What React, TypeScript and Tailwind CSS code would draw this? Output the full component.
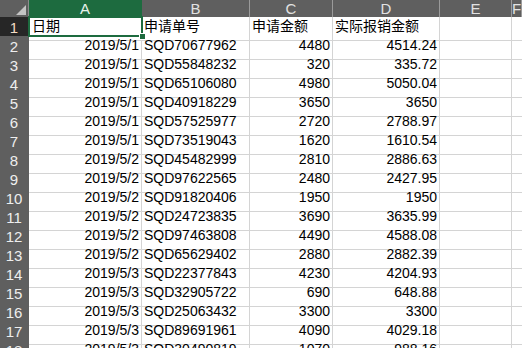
import React from 'react';

const rows: [string, string, string, string][] = [
  ['2019/5/1', 'SQD70677962', '4480', '4514.24'],
  ['2019/5/1', 'SQD55848232', '320', '335.72'],
  ['2019/5/1', 'SQD65106080', '4980', '5050.04'],
  ['2019/5/1', 'SQD40918229', '3650', '3650'],
  ['2019/5/1', 'SQD57525977', '2720', '2788.97'],
  ['2019/5/1', 'SQD73519043', '1620', '1610.54'],
  ['2019/5/2', 'SQD45482999', '2810', '2886.63'],
  ['2019/5/2', 'SQD97622565', '2480', '2427.95'],
  ['2019/5/2', 'SQD91820406', '1950', '1950'],
  ['2019/5/2', 'SQD24723835', '3690', '3635.99'],
  ['2019/5/2', 'SQD97463808', '4490', '4588.08'],
  ['2019/5/2', 'SQD65629402', '2880', '2882.39'],
  ['2019/5/3', 'SQD22377843', '4230', '4204.93'],
  ['2019/5/3', 'SQD32905722', '690', '648.88'],
  ['2019/5/3', 'SQD25063432', '3300', '3300'],
  ['2019/5/3', 'SQD89691961', '4090', '4029.18'],
  ['2019/5/3', 'SQD30490819', '1070', '988.16'],
];

const cols = ['A', 'B', 'C', 'D', 'E', 'F'];
const grid = 'grid grid-cols-[29px_113px_108px_83px_107px_72px_1fr]';
const font = "font-['Liberation_Sans','Noto_Sans_CJK_SC',sans-serif]";

export default function App() {
  return (
    <div className={`relative w-[522px] h-[348px] overflow-hidden bg-white text-[14px] ${font}`}>
      {/* column header */}
      <div className={`${grid} h-[17px] bg-[#5f5f5f]`}>
        <div className="relative border-r border-[#8c8c8c]">
          <div className="absolute right-[2px] bottom-[2px] w-0 h-0 border-l-[10px] border-l-transparent border-b-[10px] border-b-[#c4c4c4]" />
        </div>
        {cols.map((c, i) => (
          <div
            key={c}
            className={`flex items-center justify-center leading-[17px] text-[15px] border-r ${
              i === 0 ? 'bg-[#1d6b3f] text-[#e8f2ec] border-[#1d6b3f]' : 'text-[#e2e2e2] border-[#9a9a9a]'
            }`}
          >
            {c}
          </div>
        ))}
      </div>

      {/* row 1 */}
      <div className={`${grid} h-[19px]`}>
        <div className="flex items-center justify-center bg-[#262626] text-[#f3dcc4] text-[15px] border-r border-b border-[#262626]">
          1
        </div>
        <div className="leading-[18px] pl-[3px] border-r border-b border-[#d4d4d4]">日期</div>
        <div className="leading-[18px] pl-[2px] border-r border-b border-[#d4d4d4] whitespace-nowrap">申请单号</div>
        <div className="leading-[18px] pl-[2px] border-r border-b border-[#d4d4d4] whitespace-nowrap">申请金额</div>
        <div className="leading-[18px] pl-[2px] border-r border-b border-[#d4d4d4] whitespace-nowrap">实际报销金额</div>
        <div className="border-r border-b border-[#d4d4d4]" />
        <div className="border-b border-[#d4d4d4]" />
      </div>

      {rows.map((r, i) => (
        <div key={i} className={`${grid} h-[19px]`}>
          <div className="flex items-center justify-center bg-[#5f5f5f] text-[#eeeeee] text-[15px] border-r border-b border-[#8c8c8c] border-r-[#5f5f5f]">
            {i + 2}
          </div>
          <div className="leading-[18px] pr-[2px] text-right border-r border-b border-[#d4d4d4]">{r[0]}</div>
          <div className="leading-[18px] pl-[2px] border-r border-b border-[#d4d4d4]">{r[1]}</div>
          <div className="leading-[18px] pr-[2px] text-right border-r border-b border-[#d4d4d4]">{r[2]}</div>
          <div className="leading-[18px] pr-[2px] text-right border-r border-b border-[#d4d4d4]">{r[3]}</div>
          <div className="border-r border-b border-[#d4d4d4]" />
          <div className="border-b border-[#d4d4d4]" />
        </div>
      ))}

      {/* active cell A1 */}
      <div className="absolute left-[28px] top-[16px] w-[115px] h-[21px] border-2 border-[#1d6b3f]" />
      <div className="absolute left-[139px] top-[33px] w-[7px] h-[7px] bg-[#1d6b3f] border border-white" />
    </div>
  );
}
